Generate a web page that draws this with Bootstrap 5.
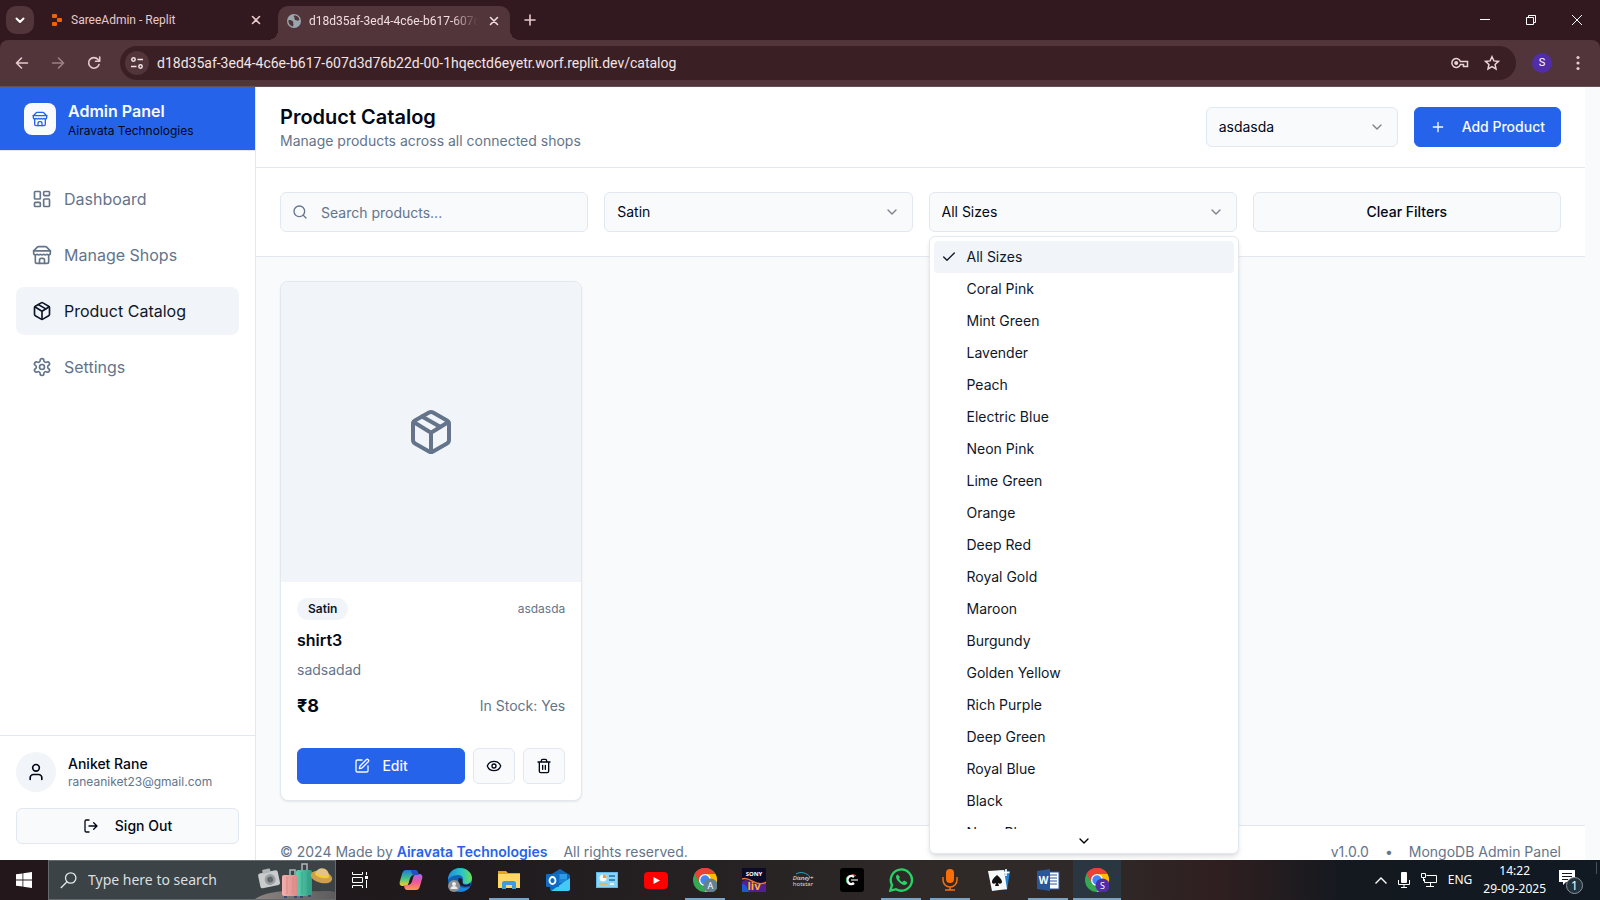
<!DOCTYPE html>
<html lang="en">
<head>
<meta charset="utf-8">
<meta name="viewport" content="width=device-width, initial-scale=1">
<title>Product Catalog</title>
<link href="https://cdn.jsdelivr.net/npm/bootstrap@5.3.0/dist/css/bootstrap.min.css" rel="stylesheet">
<style>
  :root { --line: #e2e8f0; --ink: #020817; --slate: #64748b; --soft: #f1f5f9; --pale: #f8fafc; --brand: #2563eb; }
  body { font-family: Inter, "Liberation Sans", sans-serif; font-size: 14px; line-height: 20px; color: var(--ink); background: var(--pale); }
  .ico { fill: none; stroke: currentColor; stroke-width: 2; stroke-linecap: round; stroke-linejoin: round; flex: none; width: 16px; height: 16px; }
  .ico-20 { width: 20px; height: 20px; }
  .ico-48 { width: 48px; height: 48px; }
  .ico-thin { stroke-width: 1.6; }
  .txt-12 { font-size: 12px; line-height: 16px; }
  .txt-slate { color: var(--slate); }
  .txt-500 { font-weight: 500; }
  .line-t { border-top: 1px solid var(--line); }
  .line-b { border-bottom: 1px solid var(--line); }

  /* browser chrome */
  .chrome-ui { font-family: Roboto, "Noto Sans", sans-serif; color: #e8c9cc; }
  .chrome-ui button, .os-bar button { background: none; border: 0; padding: 0; color: inherit; display: inline-flex; align-items: center; justify-content: center; flex: none; }
  .tab-strip { height: 40px; background: #31191f; padding-left: 6px; font-size: 12px; line-height: 16px; }
  .chrome-ui .tab-list-btn { width: 28px; height: 28px; border-radius: 10px; background: #52353a; color: #fff; }
  .tab-idle { width: 236px; padding: 0 8px 0 15px; margin-left: 2px; }
  .tab-live { width: 232px; height: 34px; padding: 0 8px 4px 9px; margin: 0 12px 0 6px; border-radius: 10px 10px 0 0; background: #52353a; color: #f1dfe0; position: relative; }
  .tab-live::before, .tab-live::after { content: ""; position: absolute; bottom: 0; width: 10px; height: 10px; }
  .tab-live::before { left: -10px; background: radial-gradient(circle at 0 0, transparent 10px, #52353a 10px); }
  .tab-live::after { right: -10px; background: radial-gradient(circle at 100% 0, transparent 10px, #52353a 10px); }
  .tab-name { white-space: nowrap; overflow: hidden; }
  .tab-fade { -webkit-mask-image: linear-gradient(90deg, #000 84%, transparent); mask-image: linear-gradient(90deg, #000 84%, transparent); }
  .chrome-ui .tab-x { width: 16px; height: 16px; }
  .chrome-ui .win-btn { width: 46px; height: 40px; color: #fff; }
  .tool-strip { height: 47px; background: #52353a; border-bottom: 1px solid #675054; padding: 0 4px; }
  .tool-wrap { background: #31191f; }
  .tool-wrap .tool-strip { border-radius: 8px 8px 0 0; }
  .chrome-ui .nav-btn { width: 36px; height: 36px; }
  .omni { height: 34px; border-radius: 17px; background: #3a1f24; padding: 0 8px 0 5px; margin: 0 16px 0 8px; }
  .omni .site-btn { width: 24px; height: 24px; border-radius: 50%; background: #52353a; }
  .omni input { background: none; border: 0; outline: 0; color: #f3e4e5; font-size: 14px; line-height: 20px; padding: 0 0 0 8px; min-width: 0; }
  .chrome-ui .omni-btn { width: 32px; height: 32px; color: #e8d3d5; }
  .chrome-ui .profile { width: 20px; height: 20px; border-radius: 50%; background: #512da8; color: #fff; font-size: 11px; line-height: 16px; margin-right: 8px; }

  /* admin app */
  .side { width: 256px; background: #fff; border-right: 1px solid var(--line); }
  .side-head { background: var(--brand); padding: 12px 24px; gap: 12px; height: 64px; }
  .side-logo { width: 32px; height: 32px; border-radius: 8px; background: var(--pale); color: var(--brand); }
  .side-title { font-size: 16px; line-height: 24px; font-weight: 600; color: var(--pale); margin: 0; }
  .side-menu { padding: 24px 16px; gap: 8px; }
  .side-menu .nav-link { display: flex; align-items: center; gap: 12px; padding: 12px 16px; border-radius: 8px; font-size: 16px; line-height: 24px; color: var(--slate); }
  .side-menu .nav-link.active { background: var(--soft); color: #0f172a; }
  .user-pic { width: 40px; height: 40px; border-radius: 50%; background: var(--soft); }
  .btn { --bs-btn-font-size: 14px; --bs-btn-line-height: 20px; --bs-btn-font-weight: 500; --bs-btn-border-radius: 6px; --bs-btn-padding-x: 15px; display: inline-flex; align-items: center; justify-content: center; gap: 16px; }
  .btn-tone { --bs-btn-color: var(--ink); --bs-btn-bg: var(--pale); --bs-btn-border-color: var(--line); --bs-btn-hover-bg: var(--soft); --bs-btn-hover-border-color: var(--line); }
  .btn-primary { --bs-btn-bg: #2563eb; --bs-btn-border-color: #2563eb; --bs-btn-color: #f8fafc; }
  .btn-h36 { height: 36px; }
  .btn-h40 { height: 40px; }
  .btn-edit { gap: 12px; }
  .btn-square { width: 42px; padding: 0; }
  .gutter { padding-left: 24px; padding-right: 24px; }
  .page-col { margin-right: 15px; }
  .page-title { font-size: 20px; line-height: 28px; font-weight: 600; margin: 0; }
  .form-select, .form-control { height: 40px; font-size: 14px; line-height: 20px; border-color: var(--line); border-radius: 6px; background-color: var(--pale); color: var(--ink); }
  .form-select { padding: 8px 36px 8px 12px; background-position: right 12px center; background-size: 16px 16px;
    background-image: url("data:image/svg+xml,%3csvg xmlns='http://www.w3.org/2000/svg' viewBox='0 0 24 24' fill='none' stroke='%23020817' stroke-opacity='.5' stroke-width='2' stroke-linecap='round' stroke-linejoin='round'%3e%3cpath d='m6 9 6 6 6-6'/%3e%3c/svg%3e"); }
  .form-control { padding: 8px 12px 8px 40px; }
  .form-control::placeholder { color: var(--slate); opacity: 1; }
  .shop-pick { width: 192px; }
  .search-ico { position: absolute; left: 12px; top: 12px; color: var(--slate); }
  .size-menu { position: absolute; top: calc(100% + 4px); left: 8px; right: 6px; z-index: 20; background: #fff; border: 1px solid var(--line); border-radius: 6px; padding-top: 4px; box-shadow: 0 4px 6px -1px rgba(0,0,0,.1), 0 2px 4px -2px rgba(0,0,0,.1); }
  .size-list { list-style: none; margin: 0 4px; padding: 0; max-height: calc(100vh - 312px); overflow: hidden; }
  .size-list li { padding: 6px 8px 6px 33px; border-radius: 4px; color: #0f172a; position: relative; }
  .size-list li.picked { background: var(--soft); }
  .size-list .ico { position: absolute; left: 7px; top: 8px; }
  .more-row { height: 24px; border: 0; background: none; padding: 0; }
  .item-card { border: 1px solid var(--line); border-radius: 8px; background: #fff; overflow: hidden; box-shadow: 0 1px 2px rgba(0,0,0,.08); }
  .item-pic { aspect-ratio: 1; background: var(--soft); color: var(--slate); }
  .tag { background: var(--soft); border-radius: 11px; padding: 3px 11px; font-size: 12px; line-height: 16px; font-weight: 600; color: #0f172a; }
  .item-name { font-size: 16px; line-height: 24px; font-weight: 600; margin: 8px 0; }
  .price { font-size: 18px; line-height: 28px; font-weight: 700; }
  .foot { background: #fff; padding-top: 16px; padding-bottom: 16px; }
  .foot a { color: var(--brand); font-weight: 600; text-decoration: none; }

  /* desktop bar */
  .os-bar { height: 40px; flex: none; color: #fff; font-family: "Noto Sans", "Open Sans", sans-serif; font-size: 12px; line-height: 18px; background: linear-gradient(90deg, #23171b 0, #1f1a1d 28%, #262223 45%, #2f2a28 58%, #2f2a29 68%, #301f20 76%, #14191f 84%, #111923 100%); }
  .os-bar .start-btn { width: 48px; height: 40px; }
  .os-search { width: 288px; height: 40px; background: #3b4346; border: 1px solid #656b6d; position: relative; padding-left: 11px; gap: 11px; overflow: hidden; flex: none; }
  .os-search input { background: none; border: 0; padding: 0; outline: 0; width: 160px; color: #e0e2e3; font-size: 14px; line-height: 20px; }
  .os-search input::placeholder { color: #dcdfe0; opacity: 1; }
  .os-art { position: absolute; right: 0; top: 0; }
  .os-apps { gap: 1px; }
  .os-bar .app-btn { width: 48px; height: 40px; position: relative; }
  .os-bar .task-view { margin-right: 2px; }
  .os-bar .app-btn.on::after { content: ""; position: absolute; left: 4px; right: 4px; bottom: 0; height: 2px; background: #7ba3c4; }
  .os-bar .app-btn.front { background: #2b3740; }
  .os-bar .app-btn.front::after { left: 0; right: 0; }
  .app-btn svg { width: 24px; height: 24px; }
  .os-bar .task-view svg { width: 17px; height: 16px; }
  .tray { gap: 11px; padding-right: 3px; }
</style>
</head>
<body class="vh-100 d-flex flex-column overflow-hidden">

<svg class="d-none" aria-hidden="true">
  <symbol id="i-store" viewBox="0 0 24 24"><path d="m2 7 4.41-4.41A2 2 0 0 1 7.83 2h8.34a2 2 0 0 1 1.42.59L22 7"/><path d="M4 12v8a2 2 0 0 0 2 2h12a2 2 0 0 0 2-2v-8"/><path d="M15 22v-4a2 2 0 0 0-2-2h-2a2 2 0 0 0-2 2v4"/><path d="M2 7h20"/><path d="M22 7v3a2 2 0 0 1-2 2a2.7 2.7 0 0 1-1.59-.63.7.7 0 0 0-.82 0A2.7 2.7 0 0 1 16 12a2.7 2.7 0 0 1-1.59-.63.7.7 0 0 0-.82 0A2.7 2.7 0 0 1 12 12a2.7 2.7 0 0 1-1.59-.63.7.7 0 0 0-.82 0A2.7 2.7 0 0 1 8 12a2.7 2.7 0 0 1-1.59-.63.7.7 0 0 0-.82 0A2.7 2.7 0 0 1 4 12a2 2 0 0 1-2-2V7"/></symbol>
  <symbol id="i-dash" viewBox="0 0 24 24"><rect x="3" y="3" width="7" height="9" rx="1"/><rect x="14" y="3" width="7" height="5" rx="1"/><rect x="14" y="12" width="7" height="9" rx="1"/><rect x="3" y="16" width="7" height="5" rx="1"/></symbol>
  <symbol id="i-box" viewBox="0 0 24 24"><path d="M11 21.73a2 2 0 0 0 2 0l7-4A2 2 0 0 0 21 16V8a2 2 0 0 0-1-1.73l-7-4a2 2 0 0 0-2 0l-7 4A2 2 0 0 0 3 8v8a2 2 0 0 0 1 1.73z"/><path d="M12 22V12"/><path d="m3.3 7 7.703 4.734a2 2 0 0 0 1.994 0L20.7 7"/><path d="m7.5 4.27 9 5.15"/></symbol>
  <symbol id="i-gear" viewBox="0 0 24 24"><path d="M12.22 2h-.44a2 2 0 0 0-2 2v.18a2 2 0 0 1-1 1.73l-.43.25a2 2 0 0 1-2 0l-.15-.08a2 2 0 0 0-2.73.73l-.22.38a2 2 0 0 0 .73 2.73l.15.1a2 2 0 0 1 1 1.72v.51a2 2 0 0 1-1 1.74l-.15.09a2 2 0 0 0-.73 2.73l.22.38a2 2 0 0 0 2.73.73l.15-.08a2 2 0 0 1 2 0l.43.25a2 2 0 0 1 1 1.73V20a2 2 0 0 0 2 2h.44a2 2 0 0 0 2-2v-.18a2 2 0 0 1 1-1.73l.43-.25a2 2 0 0 1 2 0l.15.08a2 2 0 0 0 2.73-.73l.22-.39a2 2 0 0 0-.73-2.73l-.15-.08a2 2 0 0 1-1-1.74v-.5a2 2 0 0 1 1-1.74l.15-.09a2 2 0 0 0 .73-2.73l-.22-.38a2 2 0 0 0-2.73-.73l-.15.08a2 2 0 0 1-2 0l-.43-.25a2 2 0 0 1-1-1.73V4a2 2 0 0 0-2-2z"/><circle cx="12" cy="12" r="3"/></symbol>
  <symbol id="i-x" viewBox="0 0 16 16"><path d="m4.500 4.500 7 7M11.500 4.500l-7 7"/></symbol>
  <symbol id="i-chrome" viewBox="0 0 24 24"><circle cx="12" cy="12" r="12" fill="#34a853"/><path d="M12 12 1.600 6A12 12 0 0 1 22.400 6Z" fill="#ea4335"/><path d="M12 6H22.400A12 12 0 0 1 11.600 24L17.200 15Z" fill="#fbbc04"/><path d="M1.600 6A12 12 0 0 1 22.400 6H12L6.800 15Z" fill="#ea4335"/><circle cx="12" cy="12" r="6" fill="#fff"/><circle cx="12" cy="12" r="4.700" fill="#4285f4"/></symbol>
</svg>

<header class="chrome-ui flex-shrink-0">
  <div class="tab-strip d-flex align-items-center">
    <button class="tab-list-btn" aria-label="Search tabs"><svg class="ico" viewBox="0 0 16 16"><path d="m4.500 6.500 3.500 3.500 3.500-3.500"/></svg></button>
    <div class="tab-idle d-flex align-items-center">
      <svg width="12" height="12" viewBox="0 0 12 12" fill="#f26207" class="flex-shrink-0"><rect x="1" y="0" width="5" height="4" rx="1"/><rect x="6" y="4" width="5" height="4" rx="1"/><rect x="1" y="8" width="5" height="4" rx="1"/></svg>
      <span class="tab-name flex-grow-1 ms-2">SareeAdmin - Replit</span>
      <button class="tab-x" aria-label="Close tab"><svg class="ico ico-thin" viewBox="0 0 16 16"><use href="#i-x"/></svg></button>
    </div>
    <div class="tab-live d-flex align-items-center align-self-end">
      <svg width="14" height="14" viewBox="0 0 14 14" class="flex-shrink-0"><circle cx="7" cy="7" r="7" fill="#9aa6ae"/><path d="M1.500 6c2 .2 3.500 0 4.500 1.500s-.5 2 .5 3L6 12.600C3.500 12 1 9.500 1.500 6ZM7 1.500c-1 1.500 1 1.500.5 3s1.500 1.500 2.500 2 2-.5 2.500-.5C12.300 3.500 10 1 7 1.500Z" fill="#52353a"/></svg>
      <span class="tab-name tab-fade flex-grow-1 ms-2 me-2">d18d35af-3ed4-4c6e-b617-607d3d76b22d</span>
      <button class="tab-x" aria-label="Close tab"><svg class="ico ico-thin" viewBox="0 0 16 16"><use href="#i-x"/></svg></button>
    </div>
    <button class="tab-x" aria-label="New tab"><svg class="ico ico-thin" viewBox="0 0 16 16"><path d="M8 3v10M3 8h10"/></svg></button>
    <div class="ms-auto d-flex">
      <button class="win-btn" aria-label="Minimize"><svg width="10" height="10" viewBox="0 0 10 10" stroke="#fff"><path d="M0 4.500h10"/></svg></button>
      <button class="win-btn" aria-label="Restore"><svg width="10" height="10" viewBox="0 0 10 10" stroke="#fff" fill="none"><path d="M.5 2.500h7v7h-7zM2.500 2.500v-2h7v7h-2"/></svg></button>
      <button class="win-btn" aria-label="Close window"><svg width="10" height="10" viewBox="0 0 10 10" stroke="#fff" fill="none"><path d="m0 0 10 10M10 0 0 10"/></svg></button>
    </div>
  </div>
  <div class="tool-wrap">
    <div class="tool-strip d-flex align-items-center">
      <button class="nav-btn" aria-label="Back"><svg class="ico ico-thin" viewBox="0 0 16 16"><path d="M13.500 8h-11M7.500 3l-5 5 5 5"/></svg></button>
      <button class="nav-btn opacity-50" aria-label="Forward"><svg class="ico ico-thin" viewBox="0 0 16 16"><path d="M2.500 8h11M8.500 3l5 5-5 5"/></svg></button>
      <button class="nav-btn" aria-label="Reload"><svg class="ico ico-thin" viewBox="0 0 16 16"><path d="M13 9.500A5.300 5.300 0 1 1 12 4.500L13.500 6M13.700 2v4.200H9.500"/></svg></button>
      <div class="omni d-flex align-items-center flex-grow-1">
        <button class="site-btn" aria-label="Site information"><svg width="14" height="14" viewBox="0 0 14 14" fill="none" stroke="#f3e4e5" stroke-width="1.500"><circle cx="3.500" cy="3.500" r="1.700"/><path d="M7.500 3.500H13M1 10.500h5.500"/><circle cx="10.500" cy="10.500" r="1.700"/></svg></button>
        <input class="flex-grow-1" type="text" aria-label="Address" value="d18d35af-3ed4-4c6e-b617-607d3d76b22d-00-1hqectd6eyetr.worf.replit.dev/catalog">
        <button class="omni-btn" aria-label="Passwords"><svg width="18" height="12" viewBox="0 0 18 12" fill="none" stroke="currentColor" stroke-width="1.500"><path d="M9.400 4.500A4.400 4.400 0 1 0 9.400 7.500H12.500V9.500H16.500V4.500Z"/><circle cx="5.200" cy="6" r="1.300" fill="currentColor"/></svg></button>
        <button class="omni-btn" aria-label="Bookmark"><svg width="16" height="16" viewBox="0 0 16 16" fill="none" stroke="currentColor" stroke-width="1.500"><path d="m8 1.700 1.900 4.200 4.600.5-3.400 3.100.9 4.500-4-2.300L4 14l.9-4.500L1.500 6.400l4.600-.5Z"/></svg></button>
      </div>
      <button class="profile" aria-label="Profile">S</button>
      <button class="nav-btn" aria-label="Menu"><svg width="4" height="16" viewBox="0 0 4 16" fill="currentColor"><circle cx="2" cy="2.500" r="1.600"/><circle cx="2" cy="8" r="1.600"/><circle cx="2" cy="13.500" r="1.600"/></svg></button>
    </div>
  </div>
</header>

<div class="d-flex flex-grow-1 overflow-hidden">
  <aside class="side d-flex flex-column flex-shrink-0">
    <div class="side-head d-flex align-items-center line-b">
      <span class="side-logo d-flex align-items-center justify-content-center"><svg class="ico"><use href="#i-store"/></svg></span>
      <div>
        <h2 class="side-title">Admin Panel</h2>
        <div class="txt-12">Airavata Technologies</div>
      </div>
    </div>
    <nav class="side-menu nav flex-column flex-grow-1">
      <a class="nav-link" href="#"><svg class="ico ico-20"><use href="#i-dash"/></svg>Dashboard</a>
      <a class="nav-link" href="#"><svg class="ico ico-20"><use href="#i-store"/></svg>Manage Shops</a>
      <a class="nav-link active" href="#" aria-current="page"><svg class="ico ico-20"><use href="#i-box"/></svg>Product Catalog</a>
      <a class="nav-link" href="#"><svg class="ico ico-20"><use href="#i-gear"/></svg>Settings</a>
    </nav>
    <div class="line-t p-3">
      <div class="d-flex align-items-center mb-3">
        <span class="user-pic d-flex align-items-center justify-content-center me-2"><svg class="ico ico-20" viewBox="0 0 24 24"><path d="M19 21v-2a4 4 0 0 0-4-4H9a4 4 0 0 0-4 4v2"/><circle cx="12" cy="7" r="4"/></svg></span>
        <div class="ms-1">
          <div class="txt-500">Aniket Rane</div>
          <div class="txt-12 txt-slate">raneaniket23@gmail.com</div>
        </div>
      </div>
      <button class="btn btn-tone btn-h36 w-100"><svg class="ico" viewBox="0 0 24 24"><path d="M9 21H5a2 2 0 0 1-2-2V5a2 2 0 0 1 2-2h4M16 17l5-5-5-5M21 12H9"/></svg>Sign Out</button>
    </div>
  </aside>

  <div class="page-col flex-grow-1 overflow-hidden">
    <div class="bg-white line-b gutter py-3 d-flex align-items-center justify-content-between">
      <div>
        <h1 class="page-title">Product Catalog</h1>
        <div class="txt-slate">Manage products across all connected shops</div>
      </div>
      <div class="d-flex gap-3">
        <select class="form-select shop-pick" aria-label="Shop"><option>asdasda</option></select>
        <button class="btn btn-primary btn-h40"><svg class="ico" viewBox="0 0 24 24"><path d="M5 12h14M12 5v14"/></svg>Add Product</button>
      </div>
    </div>

    <div class="bg-white line-b gutter py-4">
      <div class="row row-cols-4 gx-3">
        <div class="col"><div class="position-relative">
          <svg class="ico search-ico" viewBox="0 0 24 24"><circle cx="11" cy="11" r="8"/><path d="m21 21-4.300-4.300"/></svg>
          <input class="form-control" type="text" placeholder="Search products..." aria-label="Search products">
        </div></div>
        <div class="col"><select class="form-select" aria-label="Fabric"><option>Satin</option></select></div>
        <div class="col position-relative">
          <select class="form-select" aria-label="Size"><option>All Sizes</option></select>
          <div class="size-menu">
            <ul class="size-list" role="listbox" aria-label="Sizes">
              <li class="picked" role="option" aria-selected="true"><svg class="ico" viewBox="0 0 24 24"><path d="M20 6 9 17l-5-5"/></svg>All Sizes</li>
              <li role="option">Coral Pink</li>
              <li role="option">Mint Green</li>
              <li role="option">Lavender</li>
              <li role="option">Peach</li>
              <li role="option">Electric Blue</li>
              <li role="option">Neon Pink</li>
              <li role="option">Lime Green</li>
              <li role="option">Orange</li>
              <li role="option">Deep Red</li>
              <li role="option">Royal Gold</li>
              <li role="option">Maroon</li>
              <li role="option">Burgundy</li>
              <li role="option">Golden Yellow</li>
              <li role="option">Rich Purple</li>
              <li role="option">Deep Green</li>
              <li role="option">Royal Blue</li>
              <li role="option">Black</li>
              <li role="option">Navy Blue</li>
            </ul>
            <button class="more-row w-100 d-flex align-items-center justify-content-center" aria-label="Scroll down"><svg class="ico" viewBox="0 0 24 24"><path d="m6 9 6 6 6-6"/></svg></button>
          </div>
        </div>
        <div class="col"><button class="btn btn-tone btn-h40 w-100">Clear Filters</button></div>
      </div>
    </div>

    <main class="gutter py-4">
      <div class="row row-cols-4 gx-4">
        <div class="col">
          <article class="item-card">
            <div class="item-pic d-flex align-items-center justify-content-center"><svg class="ico ico-48"><use href="#i-box"/></svg></div>
            <div class="p-3">
              <div class="d-flex align-items-center justify-content-between">
                <span class="tag">Satin</span>
                <span class="txt-12 txt-slate">asdasda</span>
              </div>
              <h3 class="item-name">shirt3</h3>
              <div class="txt-slate">sadsadad</div>
              <div class="d-flex align-items-center justify-content-between pt-2 mt-1 pb-2 mb-1">
                <span class="price">₹8</span>
                <span class="txt-slate">In Stock: Yes</span>
              </div>
              <div class="d-flex gap-2 pt-3">
                <button class="btn btn-primary btn-h36 btn-edit flex-grow-1"><svg class="ico" viewBox="0 0 24 24"><path d="M12 3H5a2 2 0 0 0-2 2v14a2 2 0 0 0 2 2h14a2 2 0 0 0 2-2v-7"/><path d="M18.375 2.625a1 1 0 0 1 3 3l-9.013 9.014a2 2 0 0 1-.853.505l-2.873.84a.5.5 0 0 1-.62-.62l.84-2.873a2 2 0 0 1 .506-.852z"/></svg>Edit</button>
                <button class="btn btn-tone btn-h36 btn-square" aria-label="View"><svg class="ico" viewBox="0 0 24 24"><path d="M2.062 12.348a1 1 0 0 1 0-.696 10.750 10.750 0 0 1 19.876 0 1 1 0 0 1 0 .696 10.750 10.750 0 0 1-19.876 0"/><circle cx="12" cy="12" r="3"/></svg></button>
                <button class="btn btn-tone btn-h36 btn-square" aria-label="Delete"><svg class="ico" viewBox="0 0 24 24"><path d="M3 6h18M19 6v14c0 1-1 2-2 2H7c-1 0-2-1-2-2V6M8 6V4c0-1 1-2 2-2h4c1 0 2 1 2 2v2M10 11v6M14 11v6"/></svg></button>
              </div>
            </div>
          </article>
        </div>
      </div>
    </main>

    <footer class="foot line-t gutter txt-slate d-flex justify-content-between">
      <div class="d-flex gap-3"><span>© 2024 Made by <a href="#">Airavata Technologies</a></span><span>All rights reserved.</span></div>
      <div class="d-flex gap-3"><span>v1.0.0</span><span>•</span><span>MongoDB Admin Panel</span></div>
    </footer>
  </div>
</div>

<footer class="os-bar d-flex align-items-center">
  <button class="start-btn" aria-label="Start"><svg width="16" height="16" viewBox="0 0 16 16" fill="#fff"><path d="M0 2.300 6.500 1.400V7.600H0ZM7.300 1.300 16 0V7.600H7.300ZM0 8.400H6.500V14.600L0 13.700ZM7.300 8.400H16V16L7.300 14.700Z"/></svg></button>
  <div class="os-search d-flex align-items-center">
    <svg width="17" height="17" viewBox="0 0 17 17" fill="none" stroke="#e6e8e9" stroke-width="1.300" class="flex-shrink-0"><circle cx="10.700" cy="6" r="5.200"/><path d="M7 9.700.8 16"/></svg>
    <input type="text" placeholder="Type here to search" aria-label="Type here to search">
    <svg class="os-art" width="80" height="38" viewBox="0 0 80 38">
      <defs>
        <linearGradient id="g-sand" x1="0" x2="1"><stop offset="0" stop-color="#8c8481"/><stop offset="1" stop-color="#5d5c5c"/></linearGradient>
        <linearGradient id="g-pink" x1="0" x2="1"><stop offset="0" stop-color="#f3b1ad"/><stop offset="1" stop-color="#db8886"/></linearGradient>
        <linearGradient id="g-teal" x1="0" x2="1"><stop offset="0" stop-color="#5fd0b1"/><stop offset="1" stop-color="#2f9c82"/></linearGradient>
      </defs>
      <path d="M0 38C10 31 28 29 50 30s22-1 30 1v7Z" fill="url(#g-sand)"/>
      <g transform="rotate(-12 13 18)"><rect x="4" y="11" width="20" height="15" rx="2" fill="#c9cbcc"/><rect x="9" y="8" width="8" height="4" rx="1" fill="#b2b5b6"/><circle cx="15" cy="19" r="5.500" fill="#9a9fa2"/><circle cx="15" cy="19" r="3" fill="#63686b"/></g>
      <path d="M47 10V3h5v7M35 15V9h5v6" fill="none" stroke="#aeb8bc" stroke-width="1.500"/>
      <rect x="41" y="9" width="16" height="26" rx="2" fill="url(#g-teal)"/><path d="M47 11v22M53 11v22" stroke="#2f9980" stroke-opacity=".6"/>
      <rect x="27" y="14" width="16" height="21" rx="2" fill="url(#g-pink)"/><path d="M32 16v17M38 16v17" stroke="#d98784"/>
      <path d="M29 36h3M39 36h3M45 36h3M53 35h3" stroke="#3c4a70" stroke-width="2"/>
      <g transform="rotate(14 67 14)"><ellipse cx="67" cy="16" rx="11" ry="6" fill="#cf9f4e"/><path d="M60 14c1-9 13-9 14 0-3 3-11 3-14 0Z" fill="#e6c283"/><path d="M60 13c4 2.500 10 2.500 14 0v2c-4 2.500-10 2.500-14 0Z" fill="#f2ce26"/></g>
    </svg>
  </div>
  <div class="os-apps d-flex">
    <button class="app-btn task-view" aria-label="Task view"><svg viewBox="0 0 17 16" fill="none" stroke="#fff"><path d="M.5 0v2.500h10V0M.5 5.500h10v5H.5zM.5 16v-2.500h10V16M14.500 0v3M14.500 8v8"/><path d="M13 4h3v3h-3z" fill="#fff" stroke="none"/></svg></button>
    <button class="app-btn" aria-label="Copilot"><svg viewBox="0 0 24 24"><defs><linearGradient id="g-co1" x2="0" y2="1"><stop stop-color="#1e78e0"/><stop offset=".5" stop-color="#3fbf8a"/><stop offset="1" stop-color="#f6d32b"/></linearGradient><linearGradient id="g-co2" x2="0" y2="1"><stop stop-color="#a565f0"/><stop offset=".5" stop-color="#f0569a"/><stop offset="1" stop-color="#fb9a50"/></linearGradient></defs><path d="M7 2h9c3 0 3 4 4 5h-5c-3 0-4 3-5 7-1 3-2 4-4 4H4c-3 0-4-2-3-5L3 6c1-3 2-4 4-4Z" fill="url(#g-co1)"/><path d="M17 22H8c-3 0-2-4-4-5h5c3 0 4-3 5-7 1-3 2-4 4-4h2c3 0 4 2 3 5l-2 7c-1 3-2 4-4 4Z" fill="url(#g-co2)"/><path d="M12 2h4c3 0 3 4 4 5h-5c-2 0-3-3-3-5Z" fill="#2052c4"/></svg></button>
    <button class="app-btn" aria-label="Edge"><svg viewBox="0 0 24 24"><defs><linearGradient id="g-edge"><stop stop-color="#1c8fe0"/><stop offset=".6" stop-color="#2fc6c2"/><stop offset="1" stop-color="#6be04d"/></linearGradient></defs><circle cx="12" cy="12" r="12" fill="#1263b5"/><path d="M0 12C0 5 5 0 12 0s12 5 12 10c0 4-3 6-6 6s-4-1-3-3c1-4-2-6-5-6-5 0-9 3-10 5Z" fill="url(#g-edge)"/><path d="M10 12c-2 5 3 10 11 7l1 0c-3 4-9 6-14 4-4-4-3-9 2-11Z" fill="#1a87dd"/><path d="M11 10c4 0 3 3 4 6 2 2 5 1 7-1 2 4-4 4-8 3-3-1-5-5-3-8Z" fill="#1f1a1d"/><circle cx="6" cy="18" r="6" fill="#8d9193"/><circle cx="6" cy="16" r="2" fill="#eee"/><path d="M2.500 21c0-4 7-4 7 0Z" fill="#eee"/></svg></button>
    <button class="app-btn on" aria-label="File Explorer"><svg viewBox="0 0 24 24"><path d="M1 3h8l2 2h12v15H1Z" fill="#e9a21b"/><path d="M1 6h22v14H1Z" fill="#ffd869"/><path d="M5 21v-6c0-1 1-2 2-2h10c1 0 2 1 2 2v6h-4v-4H9v4Z" fill="#3d9be0"/></svg></button>
    <button class="app-btn" aria-label="Outlook"><svg viewBox="0 0 24 24"><path d="M4 7 14 1l10 6v14c0 1-1 2-2 2H6c-1 0-2-1-2-2Z" fill="#1066b5"/><path d="M7 6h14v9H7Z" fill="#1c86d6"/><path d="M14 6h7v5h-7Z" fill="#2d9be6"/><path d="m24 10-19 13h17c1 0 2-1 2-2Z" fill="#45c8f7"/><rect y="6" width="13" height="13" rx="1" fill="#0f6cc4"/><ellipse cx="6.500" cy="12.500" rx="3" ry="3.500" fill="none" stroke="#fff" stroke-width="1.800"/></svg></button>
    <button class="app-btn" aria-label="Control Panel"><svg viewBox="0 0 24 24"><rect x="1" y="4" width="22" height="16" fill="#5db8e8"/><rect x="2" y="5" width="20" height="14" fill="#8bd4f5"/><circle cx="8" cy="10" r="3.500" fill="#f8fbfd"/><path d="M8 10V6.500A3.500 3.500 0 0 1 11.500 10Z" fill="#f29b2e"/><path d="M14 8h6M14 12h6" stroke="#1c6fa6" stroke-width="1.500"/><path d="M4 16h9" stroke="#f2b53b" stroke-width="1.500"/><path d="M15 16h4" stroke="#fff" stroke-width="1.500"/></svg></button>
    <button class="app-btn" aria-label="YouTube"><svg viewBox="0 0 24 24"><rect y="4" width="24" height="17" rx="4" fill="#f00"/><path d="m9.500 9 6.500 3.500L9.500 16Z" fill="#fff"/></svg></button>
    <button class="app-btn on" aria-label="Chrome, profile A"><svg viewBox="0 0 24 24"><use href="#i-chrome" width="24" height="24"/><circle cx="17.500" cy="17.500" r="7" fill="#64818f"/><text x="17.500" y="21" font-size="9" text-anchor="middle" fill="#fff">A</text></svg></button>
    <button class="app-btn" aria-label="Sony LIV"><svg viewBox="0 0 24 24"><rect width="24" height="24" fill="#0c0b29"/><path d="M0 13C8 8 18 22 24 14v10H0Z" fill="#51208f"/><path d="M0 11c8-3 15 9 24 3" stroke="#f2762e" stroke-width="1.500" fill="none"/><path d="M0 16c6 0 4 6 8 8H0Z" fill="#2055d8"/><text x="12" y="7.500" font-size="6" font-weight="700" text-anchor="middle" fill="#fff">SONY</text><text x="12" y="22" font-size="11" font-weight="700" text-anchor="middle" fill="#f9b529">liv</text></svg></button>
    <button class="app-btn" aria-label="Disney+ Hotstar"><svg viewBox="0 0 24 24"><path d="M5 6c5-3 11-1 14 3" stroke="#2ba6c4" fill="none"/><text x="12" y="12" font-size="6" font-style="italic" text-anchor="middle" fill="#e9ecef">Disney+</text><text x="12" y="18" font-size="6" text-anchor="middle" fill="#d5d9dc">hotstar</text></svg></button>
    <button class="app-btn" aria-label="Cricket"><svg viewBox="0 0 24 24"><rect width="24" height="24" rx="3" fill="#000"/><path d="M14 9a4 4 0 1 0 0 6" fill="none" stroke="#fff" stroke-width="2.500"/><path d="M8 8a5.500 5.500 0 0 0 0 8" fill="none" stroke="#45b36b"/><path d="M12 6.500a5.500 5.500 0 0 1 4 1.500" fill="none" stroke="#e5533d"/><path d="M11 12h7" stroke="#bbb" stroke-width="1.500"/></svg></button>
    <button class="app-btn on" aria-label="WhatsApp"><svg viewBox="0 0 24 24"><path d="M1.300 22.700 3 17A10.600 10.600 0 1 1 7 21.200Z" fill="none" stroke="#25d366" stroke-width="2.300"/><path d="M8.500 6.500c-2 1-2 3.500.5 6.500s6 5 8 3.500 1-2.500 0-3l-2-1-1.500 1.500c-1.500-.5-3-2-3.500-3.500L11 9Z" fill="#25d366"/></svg></button>
    <button class="app-btn on" aria-label="Recorder"><svg viewBox="0 0 24 24"><rect x="8" y="1" width="8" height="14" rx="4" fill="#fa6e0a"/><path d="M5 9v3a7 7 0 0 0 14 0V9M12 19v3M7 22h10" fill="none" stroke="#fa6e0a" stroke-width="1.500"/></svg></button>
    <button class="app-btn" aria-label="Solitaire"><svg viewBox="0 0 24 24"><path d="m12 2 11 1-3 19-9-1Z" fill="#1f84d6"/><path d="m1 3 16-1 3 19-15 2Z" fill="#f7f8f8"/><path d="M10 7c2 2 5 4 5 7 0 2-3 2-4 1l1 3H8l1-3c-2 1-4 1-4-1 0-3 3-5 5-7Z" fill="#111"/><path d="M19 1v7M15.500 4.500h7" stroke="#fff" stroke-width="1.600"/></svg></button>
    <button class="app-btn on" aria-label="Word"><svg viewBox="0 0 24 24"><rect x="12" y="4" width="11" height="17" fill="#fff" stroke="#2b579a"/><path d="M14 7h7M14 10h7M14 13h7M14 16h7" stroke="#2b579a"/><path d="m1 3 13-2v22L1 21Z" fill="#2b579a"/><text x="7.500" y="16" font-size="10" font-weight="700" text-anchor="middle" fill="#fff">W</text></svg></button>
    <button class="app-btn on front" aria-label="Chrome, profile S"><svg viewBox="0 0 24 24"><use href="#i-chrome" width="24" height="24"/><circle cx="17.500" cy="17.500" r="7" fill="#512da8"/><text x="17.500" y="21" font-size="9" text-anchor="middle" fill="#fff">S</text></svg></button>
  </div>
  <div class="tray d-flex align-items-center ms-auto">
    <svg width="12" height="7" viewBox="0 0 12 7" fill="none" stroke="#fff" stroke-width="1.400"><path d="m.5 6.500 5.500-5.500 5.500 5.500"/></svg>
    <svg width="12" height="16" viewBox="0 0 12 16" fill="none" stroke="#fff"><rect x="3" y="0" width="6" height="11" rx="1" fill="#fff" stroke="none"/><path d="M.5 8v4.500h11V8M6 13v2.500M3 15.500h6"/></svg>
    <svg width="16" height="14" viewBox="0 0 16 14" fill="none" stroke="#fff"><path d="M5.500 2.500h10v7h-12V6M.5.500h4v4h-4zM2.500 5v3M9.500 10v3.500M5 13.500h8"/></svg>
    <span>ENG</span>
    <div class="text-center">14:22<br>29-09-2025</div>
    <button aria-label="Notifications"><svg width="28" height="28" viewBox="0 0 28 28"><path d="M2 4h16v12h-9l-3 3v-3H2Z" fill="#fff"/><path d="M5 7.500h10M5 10.500h10M5 13.500h6" stroke="#14191f"/><circle cx="17.500" cy="19.500" r="8" fill="#24323c" stroke="#8b959b"/><text x="17.500" y="24" font-size="12" text-anchor="middle" fill="#fff">1</text></svg></button>
    <span class="vr h-100"></span>
  </div>
</footer>

<script src="https://cdn.jsdelivr.net/npm/bootstrap@5.3.0/dist/js/bootstrap.bundle.min.js"></script>
</body>
</html>
